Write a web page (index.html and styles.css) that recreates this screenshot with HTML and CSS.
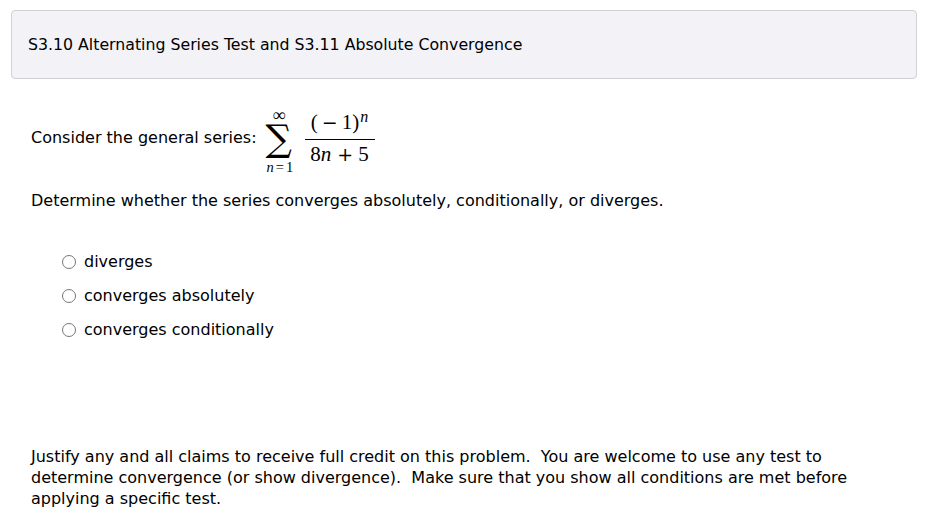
FILE: index.html
```html
<!DOCTYPE html>
<html>
<head>
<meta charset="utf-8">
<link rel="stylesheet" href="styles.css">
</head>
<body>
<div class="header">S3.10 Alternating Series Test and S3.11 Absolute Convergence</div>
<div class="problem">
  <div class="series-line">
    <span class="lead">Consider the general series:</span>
    <span class="math">
      <span class="sum">
        <span class="lim top">∞</span>
        <span class="sigma">∑</span>
        <span class="lim bottom"><i>n</i><span class="eq">=</span>1</span>
      </span>
      <span class="frac">
        <span class="num">(<span class="minus">−</span>1)<sup>n</sup></span>
        <span class="den">8<i>n</i><span class="plus">+</span>5</span>
      </span>
    </span>
  </div>
  <p class="question">Determine whether the series converges absolutely, conditionally, or diverges.</p>
  <div class="choices">
    <label class="choice"><span class="radio"></span>diverges</label>
    <label class="choice"><span class="radio"></span>converges absolutely</label>
    <label class="choice"><span class="radio"></span>converges conditionally</label>
  </div>
  <p class="note">Justify any and all claims to receive full credit on this problem.&nbsp; You are welcome to use any test to determine convergence (or show divergence).&nbsp; Make sure that you show all conditions are met before applying a specific test.</p>
</div>
</body>
</html>
```
FILE: styles.css
```css
body {
  margin: 0;
  padding: 10px 31px 0 11px;
  font-family: "DejaVu Sans", sans-serif;
  font-size: 16px;
  color: #000;
  background: #fff;
}
.header {
  height: 69px;
  box-sizing: border-box;
  border: 1px solid #d0d0d8;
  border-radius: 4px;
  background: #f2f2f7;
  padding: 0 16px;
  display: flex;
  align-items: center;
  font-size: 15.75px;
}
.problem {
  padding-left: 20px;
}
.series-line {
  display: flex;
  align-items: center;
  margin-top: 30px;
  height: 58px;
}
.lead {
  line-height: 20px;
}
.math {
  display: inline-flex;
  align-items: center;
  margin-left: 8px;
  font-family: "Liberation Serif", "DejaVu Serif", serif;
}
.sum {
  display: flex;
  flex-direction: column;
  align-items: flex-start;
  width: 35px;
  margin-top: 8px;
}
.sigma {
  font-family: "DejaVu Serif", serif;
  font-size: 37px;
  line-height: 34px;
  height: 34px;
  margin-top: 2px;
  margin-left: 1px;
}
.lim {
  white-space: nowrap;
}
.lim.top {
  font-size: 18px;
  line-height: 10px;
  height: 10px;
  padding-left: 8px;
  margin-top: -1px;
}
.lim.bottom {
  font-size: 14.5px;
  line-height: 14px;
  height: 14px;
  margin-top: 4px;
  padding-left: 2px;
}
.eq {
  margin: 0 2px;
}
.frac {
  display: inline-flex;
  flex-direction: column;
  align-items: center;
  width: 70px;
  margin-left: 5px;
  margin-top: 1px;
  font-size: 21px;
  line-height: 21px;
}
.num {
  align-self: stretch;
  text-align: center;
  padding: 0 0 6px;
  border-bottom: 1px solid #000;
}
.num sup {
  font-style: italic;
  font-size: 16px;
  vertical-align: 7px;
  line-height: 0;
  margin-left: 1px;
}
.minus, .plus {
  font-family: "DejaVu Serif", serif;
  font-size: 19px;
}
.minus { margin: 0 4px; }
.den { padding-top: 4px; }
.plus { margin: 0 5px 0 6px; }
.question {
  margin: 24px 0 0;
  line-height: 20px;
}
.choices {
  margin-top: 40px;
  padding-left: 31px;
  display: flex;
  flex-direction: column;
  gap: 13px;
}
.choice {
  display: flex;
  align-items: center;
  height: 21px;
}
.radio {
  width: 14px;
  height: 14px;
  border: 1px solid #767676;
  border-radius: 50%;
  margin-right: 8px;
  box-sizing: border-box;
}
.note {
  margin: 106px 0 0;
  line-height: 21px;
  max-width: 830px;
}
```
